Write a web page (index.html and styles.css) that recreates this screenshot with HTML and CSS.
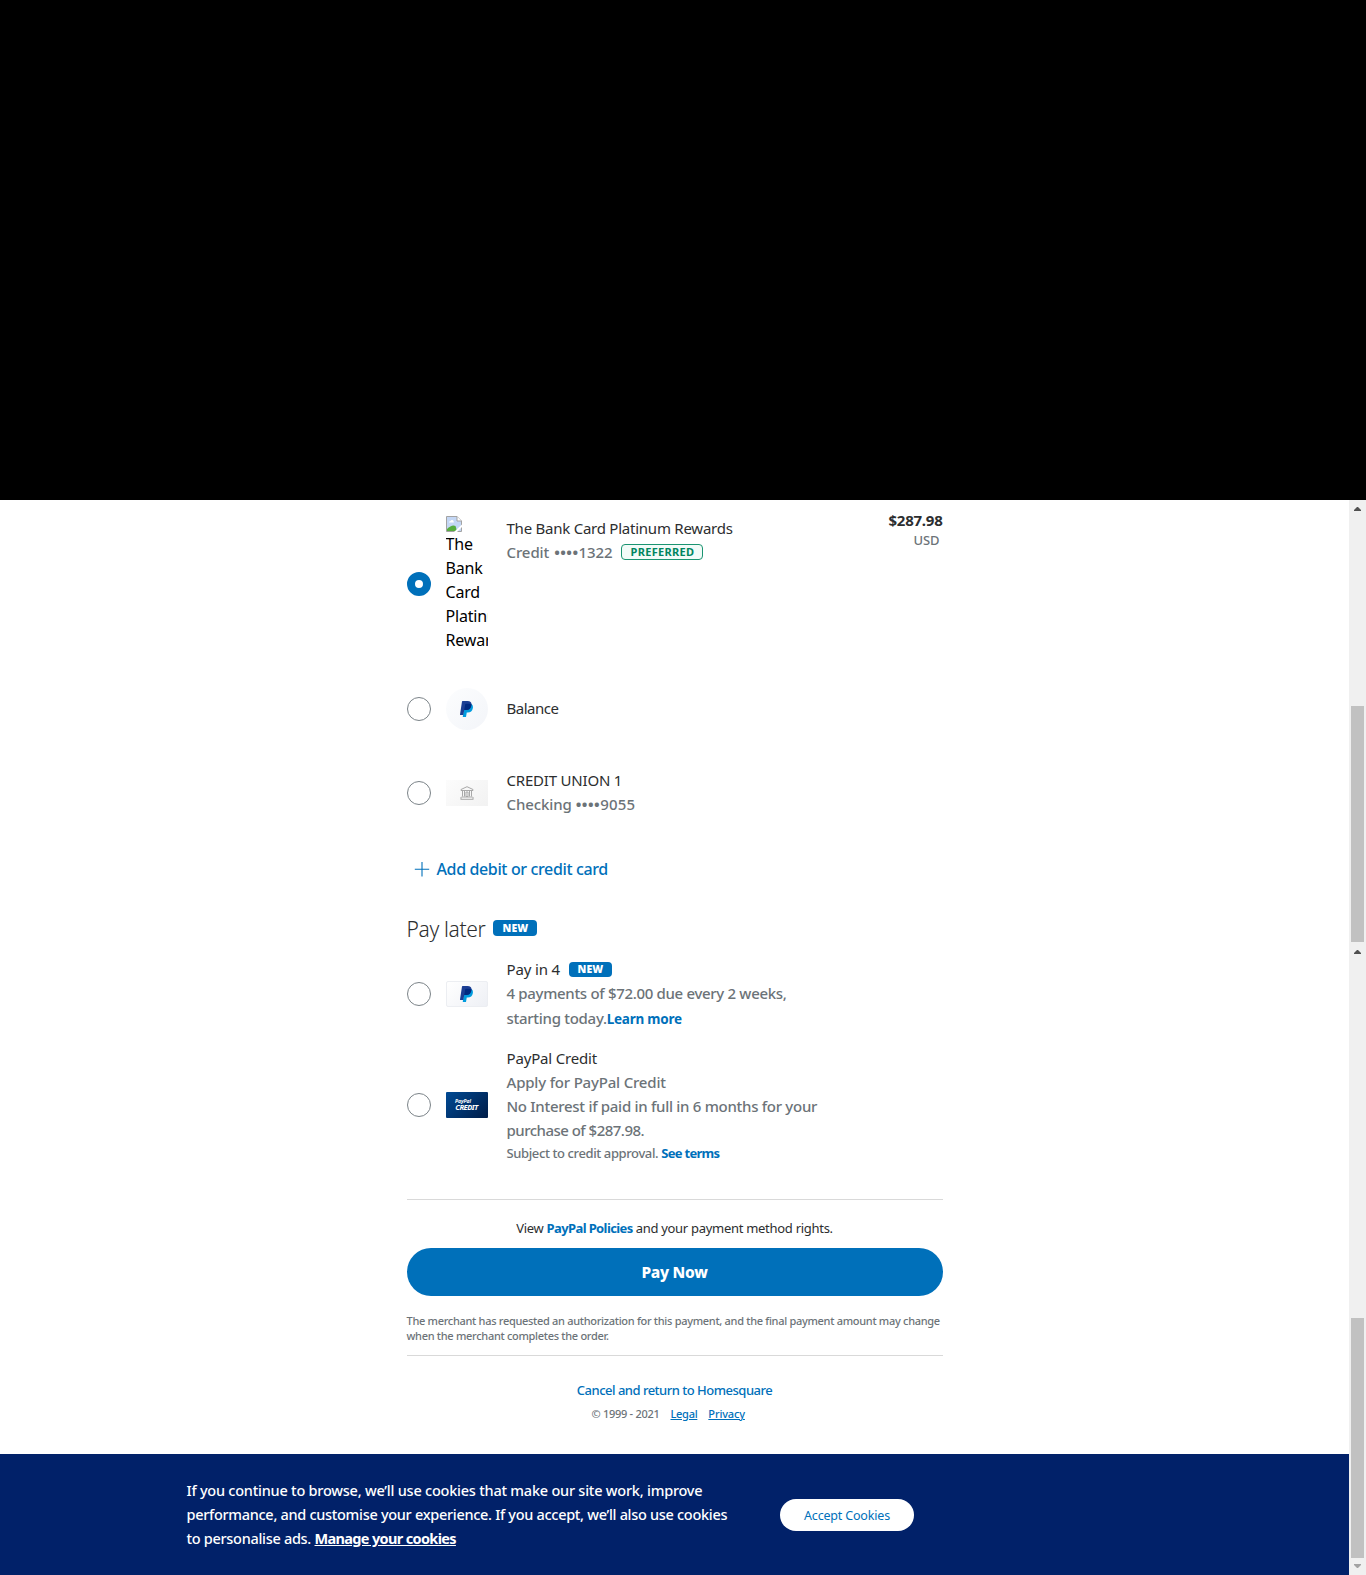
FILE: index.html
```html
<!DOCTYPE html>
<html lang="en">
<head>
<meta charset="utf-8">
<title>PayPal Checkout</title>
<link rel="stylesheet" href="styles.css">
</head>
<body>
<svg class="defs" width="0" height="0">
  <symbol id="pp" viewBox="0 0 26 32">
    <path fill="#009cde" d="M8 12 23 6Q27 9 25.500 15 24 23 15.500 23H13.500L12 32H5.500Z"/>
    <path fill="#1c3f94" d="M5 0H15Q23.500 0 23 7 22 18 12 18H8.500L6.500 28H0.500Q0 28 0 27L4 1Q4.200 0 5 0Z"/>
    <path fill="#012a80" d="M8.500 18 10.500 6.500Q10.800 5.500 12 5.500H18Q21 5.500 23 7 22 18 12 18Z"/>
  </symbol>
</svg>
<div class="blackout"></div>
<div class="frame">
  <div class="page">
    <main class="column">
      <section class="option first">
        <span class="radio checked"></span>
        <div class="alt">
          <svg width="16" height="16" viewBox="0 0 16 16"><path fill="#c4d7f5" stroke="#a3a3a3" d="M.5 15.500V.5H11L15.500 5V15.500Z"/><path fill="#fff" d="M3 6.500Q3 5 4.500 5 5 3.500 6.500 4 8 4.500 7.800 6.500Z"/><path fill="#56ad3f" d="M1 15V13Q6 8 9.500 10L11 15Z"/><path fill="#fff" d="M8 16 16 8.500V11L11 16Z"/><path fill="#fff" stroke="#a3a3a3" d="M11 .5V5H15.500"/></svg>
          <span>The</span><span>Bank</span><span>Card</span><span>Platinum</span><span>Rewards</span>
        </div>
        <div class="text">
          <div class="name t24">The Bank Card Platinum Rewards</div>
          <div class="credit"><span>Credit</span> <span class="digits"><b>••••</b>1322</span><span class="preferred">PREFERRED</span></div>
        </div>
        <div class="price"><b>$287.98</b><span>USD</span></div>
      </section>

      <section class="option balance">
        <span class="radio"></span>
        <span class="logo round"><svg width="13" height="16"><use href="#pp"/></svg></span>
        <div class="text"><div class="name short">Balance</div></div>
      </section>

      <section class="option bank">
        <span class="radio"></span>
        <span class="logo grey"><svg width="14" height="14" viewBox="0 0 14 14" fill="none" stroke="#a8a8a8"><path d="M1 4.500V3.500L7 .7 13 3.500V4.500ZM2.500 4.500V10.500M11.500 4.500V10.500M4.500 5V10.500M9.500 5V10.500M6 6H8V10.500H6ZM1.500 11H12.500M.5 13.300H13.500M1 11V13M13 11V13"/></svg></span>
        <div class="text"><div class="name t25">CREDIT UNION 1</div><div class="credit"><span>Checking</span> <span class="digits"><b>••••</b>9055</span></div></div>
      </section>

      <a class="add"><svg width="16" height="16" viewBox="0 0 16 16"><path d="M8 1V15.500M.8 8.300H15.200" stroke="#0070ba" stroke-width="1.100"/></svg><span>Add debit or credit card</span></a>

      <h2 class="later"><span>Pay later</span><span class="new">NEW</span></h2>

      <section class="option four">
        <span class="radio"></span>
        <span class="logo card"><svg width="13" height="16"><use href="#pp"/></svg></span>
        <div class="text">
          <div class="name t15 withnew"><span>Pay in 4</span><span class="new small">NEW</span></div>
          <div class="t20">4 payments of $72.00 due every 2 weeks,</div>
          <div class="t17 drop">starting today.<a class="learn">Learn more</a></div>
        </div>
      </section>

      <section class="option ppc">
        <span class="radio"></span>
        <span class="logo navy"><i>PayPal</i><b>CREDIT</b></span>
        <div class="text">
          <div class="name t17">PayPal Credit</div>
          <div class="t07">Apply for PayPal Credit</div>
          <div class="t17">No Interest if paid in full in 6 months for your</div>
          <div class="t40">purchase of $287.98.</div>
          <div class="subject">Subject to credit approval. <a>See terms</a></div>
        </div>
      </section>

      <p class="policies">View <a>PayPal Policies</a> and your payment method rights.</p>
      <button class="pay">Pay Now</button>
      <p class="notice">The merchant has requested an authorization for this payment, and the final payment amount may change<br>when the merchant completes the order.</p>
      <a class="cancel">Cancel and return to Homesquare</a>
      <footer class="legal"><span>© 1999 - 2021</span><a>Legal</a><a class="privacy">Privacy</a></footer>
    </main>
    <aside class="cookies">
      <p><span>If you continue to browse, we’ll use cookies that make our site work, improve</span><br><span class="l2">performance, and customise your experience. If you accept, we’ll also use cookies</span><br><span class="l2">to personalise ads.</span> <a>Manage your cookies</a></p>
      <button>Accept Cookies</button>
    </aside>
  </div>
  <div class="scroll">
    <div class="track upper"><i class="up"></i><span class="thumb"></span></div>
    <div class="track lower"><i class="up"></i><span class="thumb"></span><i class="down"></i></div>
  </div>
</div>
</body>
</html>
```
FILE: styles.css
```css
* { box-sizing: border-box; }
body { margin: 0; background: #fff; color: #6c7378; font: 500 15px/24px "Noto Sans", "Open Sans", sans-serif; white-space: nowrap; }
p, h2 { margin: 0; }
a { color: #0070ba; }
button { border: 0; font-family: inherit; padding: 0; }
.defs { display: block; }
.blackout { height: 500px; background: #000; }
.frame { display: flex; height: 1075px; }
.page { width: 1349px; display: flex; flex-direction: column; justify-content: space-between; }
.column { width: 536px; margin: 0 auto; padding-top: 16px; display: flex; flex-direction: column; }

.option { display: grid; grid-template-columns: 24px 42px 1fr auto; column-gap: 15px; align-items: center; }
.first { height: 136px; }
.balance { height: 42px; margin-top: 36px; }
.bank { height: 48px; margin-top: 38px; }
.four { height: 72px; margin-top: 15px; }
.ppc { height: 116px; margin-top: 17px; }
.text { padding: 0 0 2px 4px; }
.four .text { margin-bottom: -2px; }
.first .text, .first .price { align-self: start; }
.name { color: #2c2e2f; font-weight: 400; }
.radio { width: 24px; height: 24px; border: 1px solid #7b8388; border-radius: 50%; background: #fff; }
.checked { border: 8px solid #0070ba; }

.alt { width: 42px; height: 136px; overflow: hidden; color: #000; font-size: 16px; font-weight: 400; letter-spacing: -.2px; display: flex; flex-direction: column; }
.alt svg { display: block; flex: none; }
.price { text-align: right; display: flex; flex-direction: column; line-height: 20px; margin-top: -6px; }
.price b { color: #2c2e2f; letter-spacing: -.24px; }
.price span { font-size: 13px; padding-right: 3px; letter-spacing: -.1px; }

.t24 { letter-spacing: -.24px; }
.t25 { letter-spacing: -.2px; }
.t20 { letter-spacing: -.32px; }
.t17 { letter-spacing: -.29px; }
.name.t17 { letter-spacing: -.17px; }
.t15 { letter-spacing: -.15px; }
.t07 { letter-spacing: -.19px; }
.t40 { letter-spacing: -.52px; }
.short { letter-spacing: -.5px; }
.credit { display: flex; align-items: center; gap: 5px; letter-spacing: -.1px; }
.bank .credit { gap: 4px; }
.bank .digits { letter-spacing: .2px; }
.digits b { letter-spacing: .45px; }
.preferred { margin-left: 4px; margin-top: -1px; width: 82px; height: 16px; border: 1px solid #1a9471; border-radius: 4px; background: #f2fbf8; color: #018560; font-size: 11px; font-weight: 700; line-height: 14px; letter-spacing: .3px; text-align: center; }
.new { display: block; width: 44px; height: 16px; border-radius: 4px; background: #0070ba; color: #fff; font-size: 10.500px; font-weight: 900; line-height: 16px; letter-spacing: .1px; text-align: center; }
.small { width: 43px; height: 15px; line-height: 15px; }
.withnew { display: flex; align-items: center; gap: 9px; }
.drop { padding-top: 1px; margin-bottom: -1px; }
.learn { font-size: 13.500px; font-weight: 700; letter-spacing: -.24px; }

.logo { width: 42px; height: 26px; display: flex; align-items: center; justify-content: center; }
.round { height: 42px; border-radius: 50%; background: linear-gradient(135deg, #fcfdfe, #f3f5f9); }
.grey { background: linear-gradient(135deg, #fcfcfc, #f2f2f2); }
.card { border: 1px solid #eceef2; border-radius: 2px; background: linear-gradient(135deg, #fff, #eef0f5); }
.navy { flex-direction: column; border-radius: 1px; background: linear-gradient(135deg, #004a94, #001c47); color: #fff; line-height: 1; }
.navy i { font-size: 5px; line-height: 5px; font-weight: 700; margin-left: -7px; }
.navy b { font-size: 7.500px; line-height: 7px; font-style: italic; font-weight: 700; letter-spacing: -.5px; }

.add { display: flex; align-items: center; gap: 7px; margin-top: 41px; padding-left: 7px; font-size: 16px; letter-spacing: -.37px; }
.later { display: flex; align-items: center; gap: 8px; margin-top: 33px; color: #2c2e2f; font-size: 21px; font-weight: 300; line-height: 28px; letter-spacing: -.35px; }
.later span:first-child { padding-top: 2px; margin-bottom: -2px; margin-top: -2px; line-height: 30px; }
.subject { font-size: 13px; line-height: 20px; letter-spacing: -.39px; padding-top: 1px; margin-bottom: -1px; }
.subject a { font-weight: 700; letter-spacing: -.7px; }

.policies { margin-top: 37px; border-top: 1px solid #d9d9d9; padding-top: 18px; color: #2c2e2f; font-size: 13px; font-weight: 400; line-height: 20px; letter-spacing: -.29px; text-align: center; }
.policies a { font-weight: 700; letter-spacing: -.62px; }
.pay { height: 48px; margin-top: 10px; border-radius: 24px; background: #0070ba; color: #fff; font-size: 15.500px; font-weight: 800; letter-spacing: -.3px; }
.notice { margin-top: 17px; padding-bottom: 12px; border-bottom: 1px solid #d9d9d9; font-size: 11px; line-height: 15px; letter-spacing: -.3px; }
.cancel { margin-top: 24px; text-align: center; font-size: 13px; line-height: 20px; letter-spacing: -.5px; }
.legal { margin-top: 6px; padding-left: 185px; display: flex; font-size: 11px; line-height: 16px; letter-spacing: -.28px; }
.legal a { margin-left: 11px; text-decoration: underline; }
.legal .privacy { letter-spacing: -.15px; }

.cookies { height: 121px; padding: 24px 0 0 186.500px; display: flex; background: #012169; color: #fff; font-size: 14.500px; }
.cookies p { width: 593.500px; letter-spacing: -.23px; }
.cookies .l2 { letter-spacing: -.3px; }
.cookies a { color: #fff; font-weight: 700; letter-spacing: -.66px; text-decoration: underline; }
.cookies button { width: 134px; height: 32px; margin-top: 21px; border-radius: 16px; background: #fff; color: #0070ba; font-size: 12.500px; letter-spacing: -.18px; }

.scroll { width: 17px; background: #f0f0f0; }
.track { display: flex; flex-direction: column; align-items: center; }
.upper { height: 442px; padding-top: 7px; }
.lower { height: 633px; padding-top: 8px; }
.up { width: 7px; height: 4px; background: #505050; clip-path: polygon(3px 0, 4px 0, 7px 3px, 7px 4px, 0 4px, 0 3px); }
.down { width: 7px; height: 4px; margin-top: 6px; background: #a3a3a3; clip-path: polygon(0 0, 7px 0, 7px 1px, 4px 4px, 3px 4px, 0 1px); }
.thumb { width: 13px; background: #c1c1c1; }
.upper .thumb { height: 236px; margin-top: 195px; }
.lower .thumb { height: 240px; margin-top: 364px; }
```
